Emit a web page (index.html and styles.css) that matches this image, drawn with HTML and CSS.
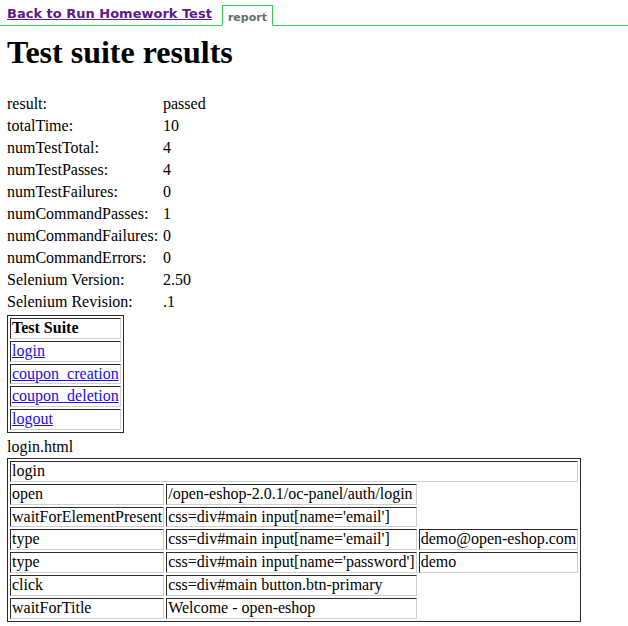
FILE: index.html
```html
<!DOCTYPE html>
<html>
<head>
<meta charset="utf-8">
<title>Test suite results</title>
<link rel="stylesheet" href="styles.css">
</head>
<body>
<div class="topbar">
  <a class="back" href="#">Back to Run Homework Test</a>
  <span class="tab">report</span>
</div>
<div class="page">
  <h1 class="title">Test suite results</h1>
  <table class="info">
    <tr><td class="k">result:</td><td>passed</td></tr>
    <tr><td class="k">totalTime:</td><td>10</td></tr>
    <tr><td class="k">numTestTotal:</td><td>4</td></tr>
    <tr><td class="k">numTestPasses:</td><td>4</td></tr>
    <tr><td class="k">numTestFailures:</td><td>0</td></tr>
    <tr><td class="k">numCommandPasses:</td><td>1</td></tr>
    <tr><td class="k">numCommandFailures:</td><td>0</td></tr>
    <tr><td class="k">numCommandErrors:</td><td>0</td></tr>
    <tr><td class="k">Selenium Version:</td><td>2.50</td></tr>
    <tr><td class="k">Selenium Revision:</td><td>.1</td></tr>
  </table>
  <table class="grid suite">
    <tr><td class="head">Test Suite</td></tr>
    <tr><td><a href="#">login</a></td></tr>
    <tr><td><a href="#">coupon_creation</a></td></tr>
    <tr><td><a href="#">coupon_deletion</a></td></tr>
    <tr><td><a href="#">logout</a></td></tr>
  </table>
  <div class="fname">login.html</div>
  <table class="grid cmds">
    <tr><td colspan="3">login</td></tr>
    <tr><td>open</td><td>/open-eshop-2.0.1/oc-panel/auth/login</td><td class="empty"></td></tr>
    <tr><td>waitForElementPresent</td><td>css=div#main input[name='email']</td><td class="empty"></td></tr>
    <tr><td>type</td><td>css=div#main input[name='email']</td><td>demo@open-eshop.com</td></tr>
    <tr><td>type</td><td>css=div#main input[name='password']</td><td>demo</td></tr>
    <tr><td>click</td><td>css=div#main button.btn-primary</td><td class="empty"></td></tr>
    <tr><td>waitForTitle</td><td>Welcome - open-eshop</td><td class="empty"></td></tr>
  </table>
</div>
</body>
</html>
```
FILE: styles.css
```css
html, body {
  margin: 0;
  padding: 0;
  background: #ffffff;
}
body {
  font-family: "Liberation Serif", "Times New Roman", serif;
  font-size: 16px;
  color: #000;
}
.topbar {
  display: flex;
  align-items: flex-end;
  height: 25px;
  border-bottom: 1px solid #33cc55;
  padding-left: 7px;
}
.back {
  font-family: "DejaVu Sans", Verdana, sans-serif;
  font-weight: bold;
  font-size: 13px;
  color: #5a1a8b;
  text-decoration: underline;
  line-height: 16px;
  margin-bottom: 3px;
}
.tab {
  margin-left: 10px;
  margin-bottom: -1px;
  height: 21px;
  box-sizing: border-box;
  border: 1px solid #33cc55;
  border-bottom: 1px solid #fff;
  background: #fff;
  padding: 4px 5px 0 5px;
  font-family: "DejaVu Sans", Verdana, sans-serif;
  font-weight: bold;
  font-size: 11px;
  line-height: 15px;
  color: #6b6b6b;
}
.page {
  padding: 0 7px;
}
.title {
  font-size: 32px;
  font-weight: bold;
  margin: 8px 0 22px;
  line-height: 37px;
}
.info {
  border-collapse: separate;
  border-spacing: 0;
  margin: 0;
}
.info td {
  padding: 2px 0;
  line-height: 18px;
  vertical-align: middle;
}
.info td.k {
  width: 156px;
}
.grid {
  border: 1px solid #2b2b2b;
  border-collapse: separate;
  border-spacing: 2px;
}
.grid td {
  padding: 0 1px;
  line-height: 18.8px;
  border-top: 1px solid #2b2b2b;
  border-left: 1px solid #2b2b2b;
  border-right: 1px solid #cfcfcf;
  border-bottom: 1px solid #cfcfcf;
  white-space: nowrap;
}
.grid td.empty {
  border: none;
}
.grid a {
  color: #1a0dee;
  text-decoration: underline;
}
.suite {
  margin-top: 2px;
}
.suite td.head {
  font-weight: bold;
}
.fname {
  margin-top: 3px;
  line-height: 22px;
}
.cmds {
  margin-top: 0;
  width: 573px;
}
```
